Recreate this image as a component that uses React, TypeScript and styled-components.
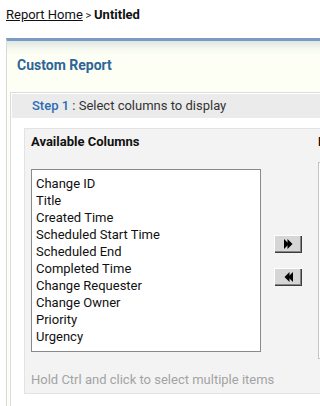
import styled, { createGlobalStyle } from "styled-components";

const GlobalStyle = createGlobalStyle`
  html, body {
    margin: 0;
    padding: 0;
    background: #ffffff;
    overflow: hidden;
  }
  body {
    font-family: Roboto, "Liberation Sans", sans-serif;
    color: #111111;
  }
`;

const Page = styled.div`
  width: 720px;
  padding-top: 6px;
`;

const Breadcrumb = styled.div`
  padding-left: 6px;
  font-size: 13px;
  line-height: 17px;
  height: 17px;
`;

const CrumbLink = styled.a`
  color: #111111;
  text-decoration: underline;
`;

const CrumbSep = styled.span`
  font-size: 11px;
  color: #222222;
`;

const CrumbCurrent = styled.span`
  font-weight: 700;
`;

const Panel = styled.div`
  margin: 15px 0 0 6px;
  border-top: 3px solid #7b9cc2;
  border-left: 1px solid #d8d8d8;
  background: #fdfff4;
`;

const PanelHeader = styled.div`
  height: 51px;
  box-sizing: border-box;
  padding: 16px 0 0 10px;
  background: linear-gradient(#dfe5e2 0px, #f6f9ef 8px, #fdfff4 14px);
`;

const PanelTitle = styled.h2`
  margin: 0;
  font-size: 14px;
  line-height: 17px;
  font-weight: 700;
  color: #2f6497;
`;

const ContentBox = styled.div`
  margin-left: 3px;
  border-top: 1px solid #dcdcdc;
  border-left: 1px solid #dcdcdc;
  padding: 1px 0 20px 1px;
  background: #ffffff;
`;

const StepBar = styled.div`
  height: 24px;
  line-height: 24px;
  padding-left: 20px;
  background: #ebebeb;
  font-size: 13px;
  color: #333333;
`;

const StepLabel = styled.span`
  color: #2b6bb3;
  font-weight: 500;
`;

const ColumnsBox = styled.div`
  margin: 10px 0 0 12px;
  border: 1px solid #e3e3e3;
  background: #f3f3f3;
  padding: 4px 0 5px 6px;
  display: grid;
  grid-template-columns: 230px 28px 240px;
  grid-template-rows: 17px 197px 17px;
  column-gap: 13px;
  row-gap: 12px;
`;

const ColumnTitle = styled.div<{ col: number }>`
  grid-row: 1;
  grid-column: ${({ col }) => col};
  font-size: 13px;
  line-height: 17px;
  font-weight: 700;
  color: #111111;
`;

const ListBox = styled.ul<{ col: number; selected?: boolean }>`
  grid-row: 2;
  grid-column: ${({ col }) => col};
  align-self: center;
  margin: 0;
  list-style: none;
  box-sizing: border-box;
  height: ${({ selected }) => (selected ? 197 : 183)}px;
  padding: 5px 0 5px 4px;
  background: #ffffff;
  border: 1px solid ${({ selected }) => (selected ? "#c4c4c4" : "#8a8a8a")};
`;

const ListItem = styled.li`
  font-size: 13px;
  line-height: 17px;
  color: #111111;
  white-space: nowrap;
`;

const ButtonColumn = styled.div`
  grid-row: 2;
  grid-column: 2;
  align-self: center;
  display: flex;
  flex-direction: column;
  gap: 15px;
`;

const MoveButton = styled.button`
  width: 28px;
  height: 18px;
  padding: 0;
  margin: 0;
  border: none;
  background: #d6d6d6;
  box-shadow: inset 1px 1px #ffffff, inset -1px -1px #3c3c3c,
    inset -2px -2px #858585;
  display: flex;
  align-items: center;
  justify-content: center;
`;

const Hint = styled.div`
  grid-row: 3;
  grid-column: 1 / 3;
  font-size: 13px;
  line-height: 17px;
  color: #a3a3a3;
  white-space: nowrap;
`;

const RightTitle = styled(ColumnTitle)`
  margin-left: 3px;
`;

const RightList = styled(ListBox)`
  margin-left: 3px;
`;

const ArrowIcon = ({ dir }: { dir: "right" | "left" }) => (
  <svg
    width="9"
    height="10"
    viewBox="0 0 9 10"
    style={dir === "left" ? { transform: "scaleX(-1)" } : undefined}
  >
    <polygon points="0,0 5,5 0,10" fill="#000" />
    <polygon points="3.5,0 8.5,5 3.5,10" fill="#000" />
  </svg>
);

const available = [
  "Change ID",
  "Title",
  "Created Time",
  "Scheduled Start Time",
  "Scheduled End",
  "Completed Time",
  "Change Requester",
  "Change Owner",
  "Priority",
  "Urgency",
];

export default function App() {
  return (
    <>
      <GlobalStyle />
      <Page>
        <Breadcrumb>
          <CrumbLink>Report Home</CrumbLink>
          <CrumbSep> &gt; </CrumbSep>
          <CrumbCurrent>Untitled</CrumbCurrent>
        </Breadcrumb>
        <Panel>
          <PanelHeader>
            <PanelTitle>Custom Report</PanelTitle>
          </PanelHeader>
          <ContentBox>
            <StepBar>
              <StepLabel>Step 1</StepLabel> : Select columns to display
            </StepBar>
            <ColumnsBox>
              <ColumnTitle col={1}>Available Columns</ColumnTitle>
              <ListBox col={1}>
                {available.map((name) => (
                  <ListItem key={name}>{name}</ListItem>
                ))}
              </ListBox>
              <ButtonColumn>
                <MoveButton>
                  <ArrowIcon dir="right" />
                </MoveButton>
                <MoveButton>
                  <ArrowIcon dir="left" />
                </MoveButton>
              </ButtonColumn>
              <RightTitle col={3}>Display Columns</RightTitle>
              <RightList col={3} selected />
              <Hint>Hold Ctrl and click to select multiple items</Hint>
            </ColumnsBox>
          </ContentBox>
        </Panel>
      </Page>
    </>
  );
}
